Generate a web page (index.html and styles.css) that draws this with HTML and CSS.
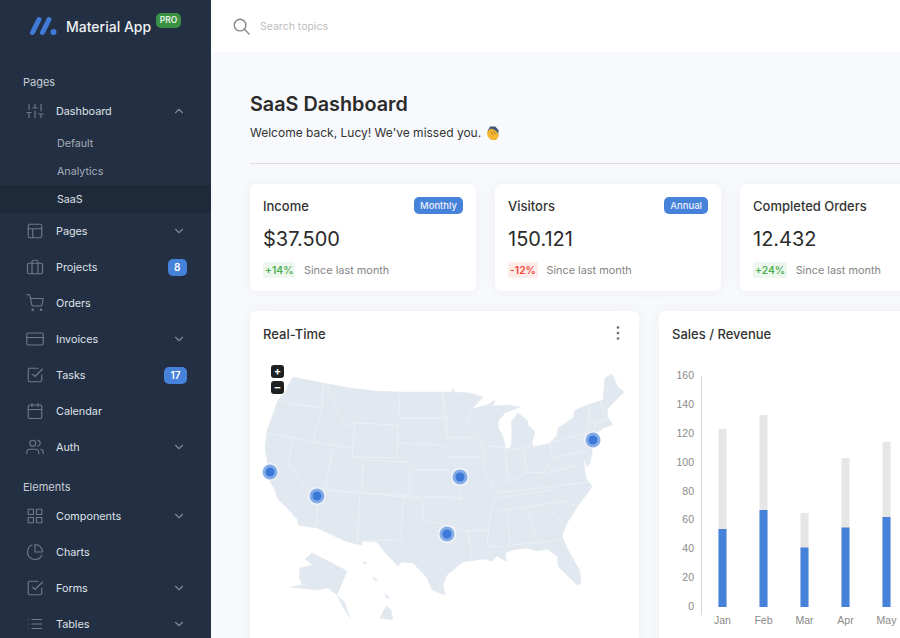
FILE: index.html
```html
<!DOCTYPE html>
<html lang="en">
<head>
    <meta charset="UTF-8">
    <title>SaaS Dashboard</title>
    <link rel="stylesheet" href="styles.css">
</head>
<body>
    <aside class="sidebar">
        <div class="brand">
            <svg class="brand-logo" viewBox="29 15 30 22"><path d="M32.5 32.5 39 19.5M42.5 32.5 49 19.5" /><circle cx="53.5" cy="32" r="3" /></svg>
            <span class="brand-name">Material App</span>
            <span class="brand-pro">PRO</span>
        </div>

        <div class="nav-label">Pages</div>
        <div class="nav-item">
            <svg class="nav-icon" viewBox="0 0 24 24"><path d="M4 21v-7M4 10V3M12 21v-9M12 8V3M20 21v-5M20 12V3M1 14h6M9 8h6M17 16h6" /></svg>
            <span class="nav-text">Dashboard</span>
            <svg class="nav-chevron" viewBox="0 0 24 24"><path d="M6 15l6-6 6 6" /></svg>
        </div>
        <div class="nav-sub">Default</div>
        <div class="nav-sub">Analytics</div>
        <div class="nav-sub active">SaaS</div>
        <div class="nav-item">
            <svg class="nav-icon" viewBox="0 0 24 24"><rect x="3" y="3" width="18" height="18" rx="2" /><path d="M3 9h18M9 21V9" /></svg>
            <span class="nav-text">Pages</span>
            <svg class="nav-chevron" viewBox="0 0 24 24"><path d="M6 9l6 6 6-6" /></svg>
        </div>
        <div class="nav-item">
            <svg class="nav-icon" viewBox="0 0 24 24"><rect x="2" y="7" width="20" height="14" rx="2" /><path d="M16 21V5a2 2 0 0 0-2-2h-4a2 2 0 0 0-2 2v16" /></svg>
            <span class="nav-text">Projects</span>
            <span class="nav-badge">8</span>
        </div>
        <div class="nav-item">
            <svg class="nav-icon" viewBox="0 0 24 24"><circle cx="9" cy="21" r="1" /><circle cx="20" cy="21" r="1" /><path d="M1 1h4l2.7 13.4a2 2 0 0 0 2 1.6h9.7a2 2 0 0 0 2-1.6L23 6H6" /></svg>
            <span class="nav-text">Orders</span>
        </div>
        <div class="nav-item">
            <svg class="nav-icon" viewBox="0 0 24 24"><rect x="1" y="4" width="22" height="16" rx="2" /><path d="M1 10h22" /></svg>
            <span class="nav-text">Invoices</span>
            <svg class="nav-chevron" viewBox="0 0 24 24"><path d="M6 9l6 6 6-6" /></svg>
        </div>
        <div class="nav-item">
            <svg class="nav-icon" viewBox="0 0 24 24"><path d="M9 11l3 3L22 4" /><path d="M21 12v7a2 2 0 0 1-2 2H5a2 2 0 0 1-2-2V5a2 2 0 0 1 2-2h11" /></svg>
            <span class="nav-text">Tasks</span>
            <span class="nav-badge">17</span>
        </div>
        <div class="nav-item">
            <svg class="nav-icon" viewBox="0 0 24 24"><rect x="3" y="4" width="18" height="18" rx="2" /><path d="M16 2v4M8 2v4M3 10h18" /></svg>
            <span class="nav-text">Calendar</span>
        </div>
        <div class="nav-item">
            <svg class="nav-icon" viewBox="0 0 24 24"><path d="M17 21v-2a4 4 0 0 0-4-4H5a4 4 0 0 0-4 4v2" /><circle cx="9" cy="7" r="4" /><path d="M23 21v-2a4 4 0 0 0-3-3.87M16 3.13a4 4 0 0 1 0 7.75" /></svg>
            <span class="nav-text">Auth</span>
            <svg class="nav-chevron" viewBox="0 0 24 24"><path d="M6 9l6 6 6-6" /></svg>
        </div>

        <div class="nav-label second">Elements</div>
        <div class="nav-item">
            <svg class="nav-icon" viewBox="0 0 24 24"><rect x="3" y="3" width="7" height="7" /><rect x="14" y="3" width="7" height="7" /><rect x="14" y="14" width="7" height="7" /><rect x="3" y="14" width="7" height="7" /></svg>
            <span class="nav-text">Components</span>
            <svg class="nav-chevron" viewBox="0 0 24 24"><path d="M6 9l6 6 6-6" /></svg>
        </div>
        <div class="nav-item">
            <svg class="nav-icon" viewBox="0 0 24 24"><path d="M21.2 15.9A10 10 0 1 1 8 2.8" /><path d="M22 12A10 10 0 0 0 12 2v10z" /></svg>
            <span class="nav-text">Charts</span>
        </div>
        <div class="nav-item">
            <svg class="nav-icon" viewBox="0 0 24 24"><path d="M9 11l3 3L22 4" /><path d="M21 12v7a2 2 0 0 1-2 2H5a2 2 0 0 1-2-2V5a2 2 0 0 1 2-2h11" /></svg>
            <span class="nav-text">Forms</span>
            <svg class="nav-chevron" viewBox="0 0 24 24"><path d="M6 9l6 6 6-6" /></svg>
        </div>
        <div class="nav-item">
            <svg class="nav-icon" viewBox="0 0 24 24"><path d="M8 6h13M8 12h13M8 18h13M3 6h.01M3 12h.01M3 18h.01" /></svg>
            <span class="nav-text">Tables</span>
            <svg class="nav-chevron" viewBox="0 0 24 24"><path d="M6 9l6 6 6-6" /></svg>
        </div>
    </aside>

    <main class="main">
        <header class="topbar">
            <svg class="search-icon" viewBox="0 0 18 18"><circle cx="7.5" cy="7.5" r="6.2" /><path d="M12 12l5 5" /></svg>
            <span class="search-text">Search topics</span>
        </header>

        <div class="content">
            <h1 class="page-title">SaaS Dashboard</h1>
            <p class="page-sub">Welcome back, Lucy! We've missed you.
                <svg class="clap" viewBox="0 0 16 16"><path class="clap-back" d="M2.5 6 5.5 1 11 1 14.5 5 14 10 8 8z" /><path class="clap-hand" d="M2 7.5 5.5 3.5 9 4 12.5 6.5 15 11 12 15.5 6.5 15.5 3 12z" /><path class="clap-line" d="M6 6.5 9 10M8.5 5.5 11.5 9" /></svg>
            </p>
            <hr class="divider">

            <section class="stat-row">
                <div class="card stat">
                    <div class="stat-head"><span class="card-title">Income</span><span class="chip">Monthly</span></div>
                    <div class="stat-value">$37.500</div>
                    <div class="stat-foot"><span class="delta up">+14%</span><span class="since">Since last month</span></div>
                </div>
                <div class="card stat">
                    <div class="stat-head"><span class="card-title">Visitors</span><span class="chip">Annual</span></div>
                    <div class="stat-value">150.121</div>
                    <div class="stat-foot"><span class="delta down">-12%</span><span class="since">Since last month</span></div>
                </div>
                <div class="card stat">
                    <div class="stat-head"><span class="card-title">Completed Orders</span></div>
                    <div class="stat-value">12.432</div>
                    <div class="stat-foot"><span class="delta up">+24%</span><span class="since">Since last month</span></div>
                </div>
            </section>

            <section class="chart-row">
                <div class="card panel map-panel">
                    <div class="panel-head">
                        <span class="card-title">Real-Time</span>
                        <svg class="kebab" viewBox="0 0 4 16"><circle cx="2" cy="2.5" r="1.3" /><circle cx="2" cy="8" r="1.3" /><circle cx="2" cy="13.5" r="1.3" /></svg>
                    </div>
                    <div class="zoom-btns">
                        <span class="zoom-btn">+</span>
                        <span class="zoom-btn">−</span>
                    </div>
                    <!-- map drawn in page coordinates -->
                    <svg class="map" viewBox="250 357 389 281">
                        <path class="land" d="M293 377 323 383 350 388 375 391 400 392 440 392 452 392 453 388 455 392 470 393 483 397 472 409 487 405 495 400 493 406 507 405 520 407 505 413 499 420 498 427 503 437 506 449 511 447 512 432 511 422 518 413 527 420 528 425 535 432 532 443 534 447 550 443 557 435 558 428 573 418 575 410 587 405 603 400 605 378 612 374 618 387 624 392 613 403 607 410 608 418 613 425 603 428 598 432 593 440 592 453 590 463 587 467 583 457 586 478 592 486 590 490 580 503 567 523 562 536 568 550 580 571 581 583 577 585 568 576 558 566 557 556 547 549 537 551 527 548 513 550 505 553 507 562 497 556 492 561 483 559 463 562 447 575 443 585 445 595 432 590 427 578 413 563 402 562 398 566 387 555 377 542 362 541 362 545 347 542 332 535 317 528 298 525 298 520 287 508 277 498 275 490 270 482 265 447 267 430 272 417 278 400 285 393 288 385z" />
                        <path class="land" d="M312 553 330 562 347 571 337 595 328 588 318 590 307 589 290 587 303 585 299 578 300 568 313 565 305 559z" />
                        <path class="land" d="M337 595 345 603 350 618 346 612 341 603z" />
                        <path class="land" d="M380 618 384 610 387 606 391 610 393 620 386 619zM385 593 390 598 386 598zM373 576 378 581 374 580zM363 561 367 563 364 564z" />
                        <path class="borders" d="M278 400 287 403 322 408M323 383 322 408 313 442M267 433 313 442 352 448M293 440 288 463 318 505 316 527M333 447 325 490M328 383 330 395 337 407 343 425 355 423M355 423 398 425 397 458 352 457zM400 392 399 418 447 418M398 443 440 445 450 450M442 392 447 417 447 438M363 460 410 462 410 495 362 493zM325 490 362 493 403 497 450 497 463 500M360 494 357 543M403 497 401 540 363 541M403 496 423 501 423 520 450 526 467 531M410 470 450 470M442 395 443 413 447 438 477 437M472 410 468 420 480 437 485 457 482 465 497 493M445 457 483 457M460 490 461 500M485 445 505 448 508 483M507 450 523 448 527 472 508 483M523 448 550 443 553 458 543 473 527 472M552 442 587 433M553 458 588 450M497 493 590 482M495 498 552 490M543 473 560 470 578 465M497 511 527 507 563 501 577 506M508 510 510 548M490 516 487 546 503 547M495 500 490 516M527 508 537 541M512 545 562 540M543 505 565 525M467 531 488 530M467 531 472 551 470 560M588 407 595 427M600 400 607 420M595 422 612 418M587 433 590 405" />
                        <circle class="pin-halo" cx="270" cy="472" r="9" /><circle class="pin-glow" cx="270" cy="472" r="7.5" /><circle class="pin" cx="270" cy="472" r="4.5" />
                        <circle class="pin-halo" cx="317" cy="496" r="9" /><circle class="pin-glow" cx="317" cy="496" r="7.5" /><circle class="pin" cx="317" cy="496" r="4.5" />
                        <circle class="pin-halo" cx="460" cy="477" r="9" /><circle class="pin-glow" cx="460" cy="477" r="7.5" /><circle class="pin" cx="460" cy="477" r="4.5" />
                        <circle class="pin-halo" cx="447" cy="534" r="9" /><circle class="pin-glow" cx="447" cy="534" r="7.5" /><circle class="pin" cx="447" cy="534" r="4.5" />
                        <circle class="pin-halo" cx="593" cy="440" r="9" /><circle class="pin-glow" cx="593" cy="440" r="7.5" /><circle class="pin" cx="593" cy="440" r="4.5" />
                    </svg>
                </div>

                <div class="card panel sales-panel">
                    <div class="panel-head"><span class="card-title">Sales / Revenue</span></div>
                    <svg class="chart" viewBox="659 357 300 281">
                        <path class="axis" d="M701.5 376V615" />
                        <g class="tick-y">
                            <text x="694" y="379">160</text>
                            <text x="694" y="408">140</text>
                            <text x="694" y="437">120</text>
                            <text x="694" y="466">100</text>
                            <text x="694" y="495">80</text>
                            <text x="694" y="523">60</text>
                            <text x="694" y="552">40</text>
                            <text x="694" y="581">20</text>
                            <text x="694" y="610">0</text>
                        </g>
                        <g class="bars-back">
                            <rect x="718.5" y="429" width="8" height="178" />
                            <rect x="759.5" y="415" width="8" height="192" />
                            <rect x="800.5" y="513" width="8" height="94" />
                            <rect x="841.5" y="458" width="8" height="149" />
                            <rect x="882.5" y="442" width="8" height="165" />
                        </g>
                        <g class="bars-front">
                            <rect x="718.5" y="529" width="8" height="78" />
                            <rect x="759.5" y="510" width="8" height="97" />
                            <rect x="800.5" y="547.5" width="8" height="59.5" />
                            <rect x="841.5" y="527.5" width="8" height="79.5" />
                            <rect x="882.5" y="517" width="8" height="90" />
                        </g>
                        <g class="tick-x">
                            <text x="722.5" y="624">Jan</text>
                            <text x="763.5" y="624">Feb</text>
                            <text x="804.5" y="624">Mar</text>
                            <text x="845.5" y="624">Apr</text>
                            <text x="886.5" y="624">May</text>
                        </g>
                    </svg>
                </div>
            </section>
        </div>
    </main>
</body>
</html>
```

FILE: styles.css
```css
/* Page frame */
html, body {
    height: 100%;
}

body {
    display: flex;
    margin: 0;
    overflow: hidden;
    font-family: 'Inter', sans-serif;
    background-color: #f7f9fc;
    color: #2b2b2b;
}

/* Sidebar */
.sidebar {
    flex: 0 0 211px;
    height: 638px;
    overflow: hidden;
    background-color: #233044;
    color: #dfe2e6;
}

.brand {
    display: flex;
    align-items: center;
    height: 52px;
    padding-left: 29px;
    box-sizing: border-box;
}

.brand-logo {
    width: 30px;
    height: 22px;
    margin-right: 7px;
    fill: #407ad6;
}

.brand-logo path {
    fill: none;
    stroke: #407ad6;
    stroke-width: 5;
    stroke-linecap: round;
}

.brand-name {
    font-size: 14px;
    font-weight: 500;
    color: #eef0f3;
}

.brand-pro {
    align-self: flex-start;
    margin: 13px 0 0 5px;
    padding: 0 3.5px;
    height: 15px;
    line-height: 15px;
    font-size: 8.5px;
    font-weight: 600;
    color: #e6f2e6;
    background-color: #3b9143;
    border-radius: 5px;
}

.nav-label {
    height: 41px;
    padding: 23px 0 0 23px;
    box-sizing: border-box;
    font-size: 11px;
    line-height: 15px;
    color: #c9ced5;
}

.nav-label.second {
    height: 33px;
    padding-top: 15px;
}

.nav-item {
    display: flex;
    align-items: center;
    height: 36px;
    padding: 0 24px 0 26px;
    font-size: 10.8px;
    font-weight: 400;
}

.nav-icon {
    flex: 0 0 18px;
    width: 18px;
    height: 18px;
    margin-right: 12px;
    fill: none;
    stroke: #6e7a8a;
    stroke-width: 1.5;
    stroke-linecap: round;
    stroke-linejoin: round;
}

.nav-text {
    flex: 1;
}

.nav-chevron {
    width: 14px;
    height: 14px;
    margin-right: 1px;
    fill: none;
    stroke: #7b8695;
    stroke-width: 2;
    stroke-linecap: round;
    stroke-linejoin: round;
}

.nav-badge {
    padding: 0 6.5px;
    height: 17px;
    line-height: 17px;
    font-size: 10px;
    font-weight: 600;
    color: #fff;
    background-color: #4782da;
    border-radius: 5px;
}

.nav-sub {
    height: 28px;
    padding-left: 57px;
    font-size: 10.7px;
    line-height: 30px;
    color: #a5acb6;
}

.nav-sub.active {
    background-color: #1e293a;
    color: #dfe2e6;
}

/* Main column */
.main {
    flex: 1;
    min-width: 0;
    height: 638px;
    overflow: hidden;
}

.topbar {
    display: flex;
    align-items: center;
    height: 52px;
    padding-left: 22px;
    background-color: #fff;
}

.search-icon {
    width: 17px;
    height: 17px;
    margin-right: 10px;
    fill: none;
    stroke: #858585;
    stroke-width: 1.4;
    stroke-linecap: round;
}

.search-text {
    margin-top: 1px;
    font-size: 10.5px;
    color: #bdbdbd;
}

.content {
    padding: 40px 0 0 39px;
}

.page-title {
    margin: 0;
    font-size: 19.8px;
    font-weight: 600;
    line-height: 25px;
    color: #2b2b2b;
}

.page-sub {
    display: flex;
    align-items: center;
    gap: 4px;
    margin: 6px 0 0;
    font-size: 12px;
    line-height: 20px;
    color: #333;
}

.clap {
    width: 15px;
    height: 16px;
}

.clap-back {
    fill: #3f5a78;
}

.clap-hand {
    fill: #f2b632;
}

.clap-line {
    fill: none;
    stroke: #b97f1d;
    stroke-width: 1;
}

.divider {
    height: 1px;
    margin: 20px 0;
    border: none;
    background-color: #e0e0e0;
}

/* Cards */
.card {
    flex-shrink: 0;
    box-sizing: border-box;
    background-color: #fff;
    border-radius: 6px;
    box-shadow: 0 0 14px 0 rgba(53, 64, 82, 0.05);
}

.card-title {
    font-size: 13px;
    font-weight: 500;
    color: #333;
}

.stat-row {
    display: flex;
    gap: 19px;
}

.stat {
    width: 226px;
    height: 107px;
    padding: 13px;
}

.stat-head {
    display: flex;
    align-items: center;
    justify-content: space-between;
    height: 17px;
}

.chip {
    padding: 0 6px;
    height: 17px;
    line-height: 17px;
    font-size: 9.5px;
    font-weight: 500;
    color: #e6eefb;
    background-color: #4782da;
    border-radius: 5px;
}

.stat-value {
    margin-top: 12px;
    font-size: 20px;
    line-height: 26px;
    color: #2b2b2b;
}

.stat-foot {
    display: flex;
    align-items: center;
    margin-top: 10px;
}

.delta {
    padding: 0 2px;
    height: 16px;
    line-height: 16px;
    margin-right: 8.5px;
    font-size: 10.3px;
    font-weight: 600;
    border-radius: 2px;
}

.delta.up {
    color: #4caf50;
    background-color: #edf7ee;
}

.delta.down {
    color: #f44336;
    background-color: #fdecea;
}

.since {
    font-size: 10.9px;
    color: #858585;
}

.chart-row {
    display: flex;
    gap: 20px;
    margin-top: 20px;
}

.panel {
    position: relative;
    height: 340px;
}

.map-panel {
    width: 389px;
}

.sales-panel {
    width: 300px;
}

.panel-head {
    display: flex;
    align-items: center;
    justify-content: space-between;
    height: 46px;
    padding: 0 19px 0 13px;
    box-sizing: border-box;
}

.kebab {
    width: 4px;
    height: 16px;
    margin-bottom: 3px;
    fill: #6a6a6a;
}

/* Map */
.zoom-btns {
    position: absolute;
    left: 21px;
    top: 54px;
    display: flex;
    flex-direction: column;
    gap: 3px;
}

.zoom-btn {
    width: 13px;
    height: 13px;
    line-height: 12px;
    text-align: center;
    font-size: 11px;
    font-weight: 700;
    color: #fff;
    background-color: #1f2021;
    border-radius: 3px;
}

.map,
.chart {
    display: block;
    width: 100%;
    height: 281px;
}

.land {
    fill: #e1e8ef;
    stroke: #e1e8ef;
    stroke-width: 0.5;
    stroke-linejoin: round;
}

.borders {
    fill: none;
    stroke: #f1f4f7;
    stroke-width: 0.7;
    stroke-linejoin: round;
}

.pin-halo {
    fill: #fff;
    fill-opacity: 0.6;
}

.pin-glow {
    fill: #4782da;
    fill-opacity: 0.65;
}

.pin {
    fill: #3c78d8;
}

/* Chart */
.axis {
    fill: none;
    stroke: #d9d9d9;
}

.tick-y text,
.tick-x text {
    font-family: 'Liberation Sans', sans-serif;
    font-size: 10.5px;
    fill: #8a8a8a;
}

.tick-y text {
    text-anchor: end;
}

.tick-x text {
    text-anchor: middle;
}

.bars-back {
    fill: #e6e6e6;
}

.bars-front {
    fill: #4782da;
}
```
